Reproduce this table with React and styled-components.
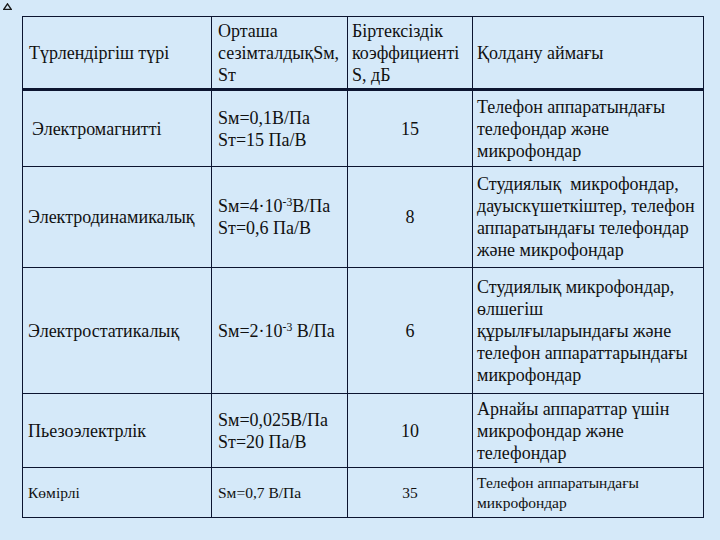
import React from 'react';
import styled, { createGlobalStyle } from 'styled-components';

const GlobalStyle = createGlobalStyle`
  html, body {
    margin: 0;
    padding: 0;
    background: #d5e9f9;
  }
  body {
    font-family: 'Liberation Serif', serif;
    color: #111;
  }
`;

const headers = [
  { key: 'type', text: 'Түрлендіргіш түрі' },
  {
    key: 'sens',
    text: (
      <>
        Орташа
        <br />
        сезімталдықSм,
        <br />
        Sт
      </>
    ),
  },
  {
    key: 'coef',
    text: (
      <>
        Біртексіздік
        <br />
        коэффициенті
        <br />
        S, дБ
      </>
    ),
    narrow: true,
  },
  { key: 'area', text: 'Қолдану аймағы', narrow: true },
];

const rows = [
  {
    type: 'Электромагнитті',
    indent: true,
    sens: (
      <>
        Sм=0,1В/Па
        <br />
        Sт=15 Па/В
      </>
    ),
    coef: '15',
    area: (
      <>
        Телефон аппаратындағы
        <br />
        телефондар және
        <br />
        микрофондар
      </>
    ),
  },
  {
    type: 'Электродинамикалық',
    sens: (
      <>
        Sм=4·10<sup>-3</sup>В/Па
        <br />
        Sт=0,6 Па/В
      </>
    ),
    coef: '8',
    area: (
      <>
        Студиялық&nbsp; микрофондар,
        <br />
        дауыскүшеткіштер, телефон
        <br />
        аппаратындағы телефондар
        <br />
        және микрофондар
      </>
    ),
  },
  {
    type: 'Электростатикалық',
    sens: (
      <>
        Sм=2·10<sup>-3</sup> В/Па
      </>
    ),
    coef: '6',
    area: (
      <>
        Студиялық микрофондар,
        <br />
        өлшегіш
        <br />
        құрылғыларындағы және
        <br />
        телефон аппараттарындағы
        <br />
        микрофондар
      </>
    ),
  },
  {
    type: 'Пьезоэлектрлік',
    sens: (
      <>
        Sм=0,025В/Па
        <br />
        Sт=20 Па/В
      </>
    ),
    coef: '10',
    area: (
      <>
        Арнайы аппараттар үшін
        <br />
        микрофондар және
        <br />
        телефондар
      </>
    ),
  },
  {
    small: true,
    type: 'Көмірлі',
    sens: 'Sм=0,7 В/Па',
    coef: '35',
    area: (
      <>
        Телефон аппаратындағы
        <br />
        микрофондар
      </>
    ),
  },
];

const App = () => {
  return (
    <>
      <GlobalStyle />
      <Page>
        <Marker width="9" height="7" viewBox="0 0 9 7">
          <path d="M4.5 0.8 L8.2 6.3 L0.8 6.3 Z" fill="none" stroke="#1a1a1a" strokeWidth="1.3" />
        </Marker>
        <Sheet>
          {headers.map((h) => (
            <HeadCell key={h.key} $narrow={h.narrow}>
              <Lines>{h.text}</Lines>
            </HeadCell>
          ))}
          {rows.map((r) => (
            <React.Fragment key={r.type}>
              <Cell $small={r.small} $pad={r.indent ? 9 : 5}>
                <Lines>{r.type}</Lines>
              </Cell>
              <Cell $small={r.small} $pad={6}>
                <Lines>{r.sens}</Lines>
              </Cell>
              <Cell $small={r.small} $center>
                <Lines>{r.coef}</Lines>
              </Cell>
              <Cell $small={r.small} $pad={4}>
                <Lines>{r.area}</Lines>
              </Cell>
            </React.Fragment>
          ))}
        </Sheet>
      </Page>
    </>
  );
};

export default App;

const Page = styled.div`
  width: 720px;
  height: 540px;
  padding: 3px 0 0 3px;
  box-sizing: border-box;
`;

const Marker = styled.svg`
  display: block;
`;

const Sheet = styled.div`
  display: grid;
  grid-template-columns: 188px 135px 124px 230px;
  grid-template-rows: 73px 75px 100px 125px 73px 49px;
  gap: 1px;
  padding: 1px;
  width: max-content;
  margin: 6px 0 0 19px;
  background: #0c1530;
`;

const HeadCell = styled.div`
  display: flex;
  align-items: center;
  padding-left: ${(p) => (p.$narrow ? 4 : 6)}px;
  border-bottom: 2px solid #0c1530;
  background: #d5e9f9;
  font-family: 'Liberation Serif', serif;
  font-size: 18px;
  line-height: 22px;
  white-space: nowrap;
  overflow: hidden;
`;

const Cell = styled.div`
  display: flex;
  align-items: center;
  justify-content: ${(p) => (p.$center ? 'center' : 'flex-start')};
  padding-left: ${(p) => p.$pad || 0}px;
  background: #d5e9f9;
  font-family: 'Liberation Serif', serif;
  font-size: ${(p) => (p.$small ? 15.5 : 18)}px;
  line-height: ${(p) => (p.$small ? 20 : 22)}px;
  white-space: nowrap;
  overflow: hidden;

  sup {
    font-size: 0.65em;
    line-height: 0;
    vertical-align: 0.55em;
  }
`;

const Lines = styled.div`
  font-family: 'Liberation Serif', serif;
`;
